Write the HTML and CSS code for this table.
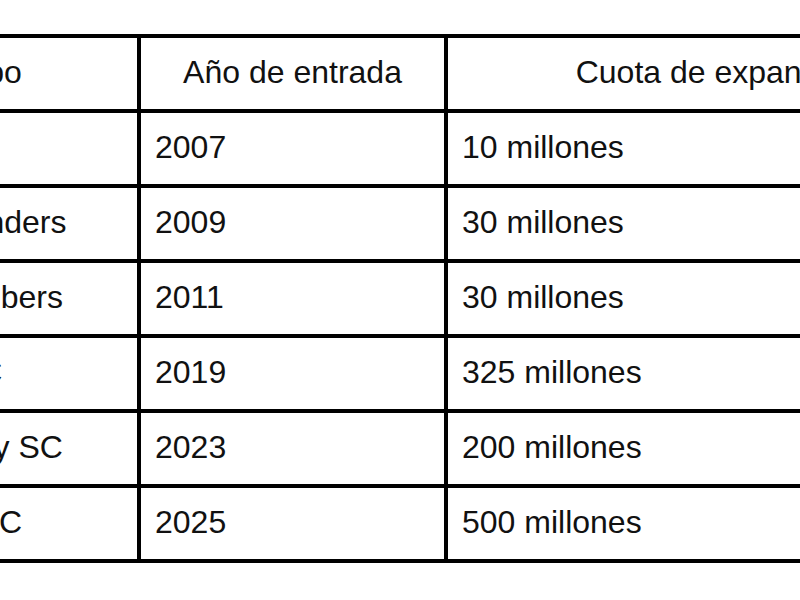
FILE: index.html
```html
<!DOCTYPE html>
<html lang="es">
<head>
<meta charset="utf-8">
<title>Cuotas de expansión</title>
<link rel="stylesheet" href="styles.css">
</head>
<body>
<table class="fees">
  <thead>
    <tr>
      <th class="c1">Equipo</th>
      <th class="c2">Año de entrada</th>
      <th class="c3">Cuota de expansión</th>
    </tr>
  </thead>
  <tbody>
    <tr><td>Toronto FC</td><td>2007</td><td>10 millones</td></tr>
    <tr><td>Seattle Sounders</td><td>2009</td><td>30 millones</td></tr>
    <tr><td>Portland Timbers</td><td>2011</td><td>30 millones</td></tr>
    <tr><td>Charlotte FC</td><td>2019</td><td>325 millones</td></tr>
    <tr><td>St. Louis City SC</td><td>2023</td><td>200 millones</td></tr>
    <tr><td>San Diego FC</td><td>2025</td><td>500 millones</td></tr>
  </tbody>
</table>
</body>
</html>
```
FILE: styles.css
```css
html, body {
  margin: 0;
  padding: 0;
  overflow: hidden;
  background: #ffffff;
}

.fees {
  width: 1189px;
  margin: 34px 0 0 -197px;
  border-collapse: separate;
  border-spacing: 0;
  table-layout: fixed;
  border-top: 4px solid #000;
  border-left: 4px solid #000;
  font-family: "Liberation Sans", Arial, sans-serif;
  font-size: 32px;
  color: #111;
}

.fees th,
.fees td {
  box-sizing: content-box;
  height: 68px;
  padding: 0 14px 3px;
  border-right: 4px solid #000;
  border-bottom: 4px solid #000;
  vertical-align: middle;
  white-space: nowrap;
  font-weight: normal;
  text-align: left;
}

.fees th {
  text-align: center;
}

.fees .c1 { width: 302px; }
.fees .c2 { width: 275px; }
.fees .c3 { width: 512px; }
```
